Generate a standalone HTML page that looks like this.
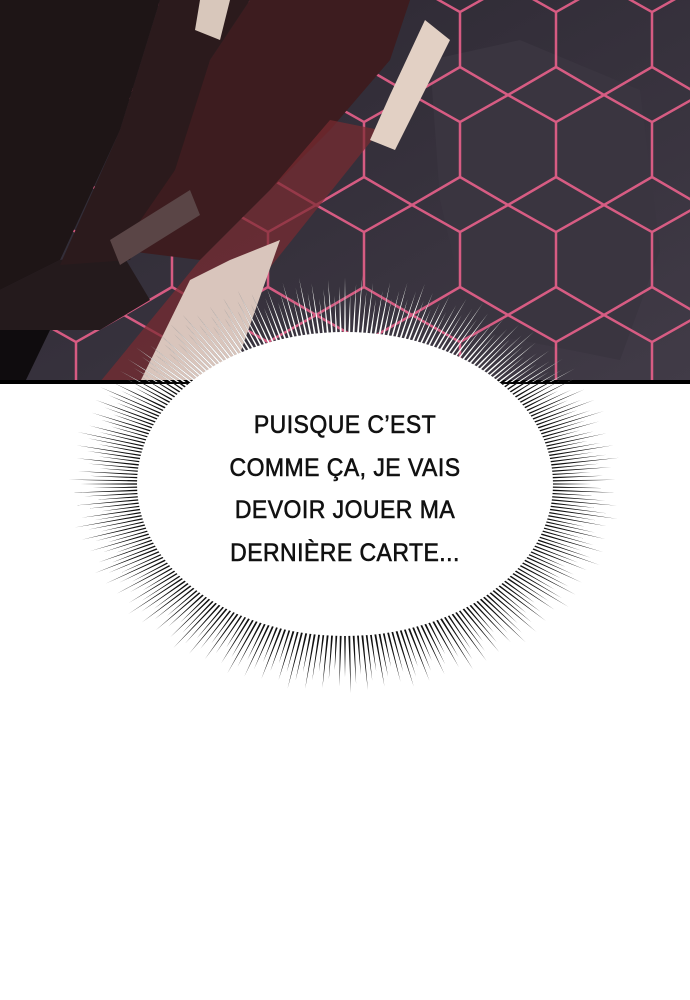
<!DOCTYPE html>
<html><head><meta charset="utf-8"><style>
html,body{margin:0;padding:0;background:#fff;width:690px;height:1000px;overflow:hidden}
svg{display:block}
</style></head><body>
<svg id="s" width="690" height="1000" viewBox="0 0 690 1000" xmlns="http://www.w3.org/2000/svg">
<defs>
<clipPath id="panel"><rect x="0" y="0" width="690" height="382"/></clipPath>
<pattern id="hex" width="96" height="110" patternUnits="userSpaceOnUse" x="-20" y="-15">
<path d="M0,27 L48,0 L96,27 M48,0 L48,-28 M0,27 L0,82 L48,110 L96,82 L96,27 M48,110 L48,140" fill="none" stroke="#e8608a" stroke-width="2.5"/>
</pattern>
<linearGradient id="bg" x1="0" y1="0" x2="1" y2="1">
<stop offset="0" stop-color="#2a2630"/><stop offset="1" stop-color="#413b47"/>
</linearGradient>
</defs>
<g clip-path="url(#panel)">
<rect width="690" height="382" fill="url(#bg)"/>
<path d="M430,60 L520,40 L640,90 L660,250 L620,360 L470,330 L440,200Z" fill="#3a3540"/>
<rect width="690" height="382" fill="url(#hex)" opacity="0.9"/>
<path d="M0,0 L160,0 L120,130 L60,260 L0,290Z" fill="#1e1516"/>
<path d="M0,290 L60,260 L120,250 L150,300 L100,330 L30,330 L0,345Z" fill="#241a1c"/>
<path d="M160,0 L250,0 L210,60 L180,160 L130,260 L60,265 L120,130Z" fill="#2b1a1c"/>
<path d="M250,0 L410,0 L390,60 L330,130 L260,200 L200,260 L120,250 L175,170 L210,60Z" fill="#3d1c1f"/>
<path d="M200,0 L230,0 L220,40 L195,30Z" fill="#d8c7bb"/>
<path d="M330,120 L380,130 L300,230 L220,330 L160,382 L100,382 L200,260 L270,190Z" fill="#7a2b30" opacity="0.7"/>
<path d="M190,280 L230,260 L280,240 L230,382 L140,382Z" fill="#d9c5bc"/>
<path d="M110,240 L190,190 L200,215 L120,265Z" fill="#5a4546"/>
<path d="M425,20 L450,40 L410,120 L395,150 L370,140 L390,95Z" fill="#e2d0c4"/>
<path d="M0,330 L50,330 L25,382 L0,382Z" fill="#0f0c0e"/>
</g>
<rect x="0" y="380" width="690" height="4" fill="#000"/>
<g id="spk"></g>
<ellipse cx="345" cy="484" rx="208" ry="152" fill="#fff"/>
<g font-family="'Liberation Sans', sans-serif" font-size="25" fill="#111" stroke="#111" stroke-width="0.6" text-anchor="middle" style="letter-spacing:0.5px" transform="translate(345,0) scale(0.92,1) translate(-345,0)">
<text x="345" y="433">PUISQUE C’EST</text>
<text x="345" y="476">COMME ÇA, JE VAIS</text>
<text x="345" y="518">DEVOIR JOUER MA</text>
<text x="345" y="561">DERNIÈRE CARTE...</text>
</g>
</svg>
<script>
(function(){
var g=document.getElementById('spk'),ns='http://www.w3.org/2000/svg';
var cx=345,cy=484,rxi=200,ryi=146,n=300,b='';
for(var i=0;i<n;i++){
 var a=i/n*Math.PI*2, da=Math.PI/n*0.5;
 var L=1.14+0.14*((i*37)%11)/10;
 var ox=cx+Math.cos(a)*rxi*L*1.08, oy=cy+Math.sin(a)*ryi*L*1.12;
 var x1=cx+Math.cos(a-da)*rxi, y1=cy+Math.sin(a-da)*ryi;
 var x2=cx+Math.cos(a+da)*rxi, y2=cy+Math.sin(a+da)*ryi;
 b+='M'+x1.toFixed(1)+','+y1.toFixed(1)+'L'+ox.toFixed(1)+','+oy.toFixed(1)+'L'+x2.toFixed(1)+','+y2.toFixed(1)+'Z';
}
var p=document.createElementNS(ns,'path');p.setAttribute('d',b);p.setAttribute('fill','#111');g.appendChild(p);
var q=document.createElementNS(ns,'path');q.setAttribute('d',b);q.setAttribute('fill','#fff');q.setAttribute('clip-path','url(#panel)');g.appendChild(q);
})();
</script>
</body></html>
